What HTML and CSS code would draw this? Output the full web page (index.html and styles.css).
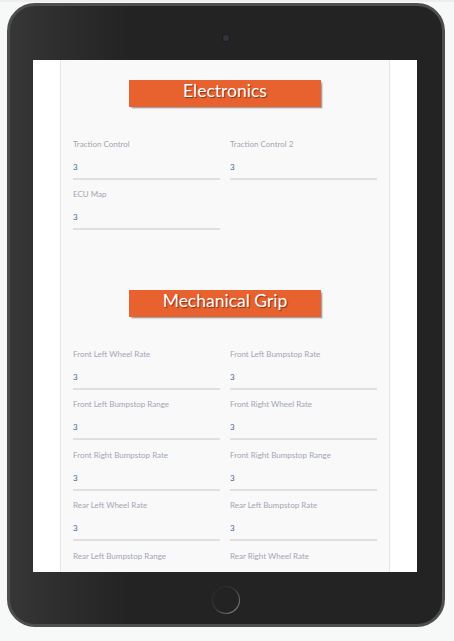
FILE: index.html
```html
<!DOCTYPE html>
<html>
<head>
<meta charset="utf-8">
<link rel="stylesheet" href="styles.css">
</head>
<body>
<div class="tablet">
  <div class="top-bar"><div class="camera"></div></div>
  <div class="screen">
    <div class="panel">
      <section class="section">
        <div class="title">Electronics</div>
        <div class="grid">
          <div class="field"><div class="label">Traction Control</div><div class="value">3</div></div>
          <div class="field"><div class="label">Traction Control 2</div><div class="value">3</div></div>
          <div class="field"><div class="label">ECU Map</div><div class="value">3</div></div>
        </div>
      </section>
      <section class="section section-gap">
        <div class="title">Mechanical Grip</div>
        <div class="grid">
          <div class="field"><div class="label">Front Left Wheel Rate</div><div class="value">3</div></div>
          <div class="field"><div class="label">Front Left Bumpstop Rate</div><div class="value">3</div></div>
          <div class="field"><div class="label">Front Left Bumpstop Range</div><div class="value">3</div></div>
          <div class="field"><div class="label">Front Right Wheel Rate</div><div class="value">3</div></div>
          <div class="field"><div class="label">Front Right Bumpstop Rate</div><div class="value">3</div></div>
          <div class="field"><div class="label">Front Right Bumpstop Range</div><div class="value">3</div></div>
          <div class="field"><div class="label">Rear Left Wheel Rate</div><div class="value">3</div></div>
          <div class="field"><div class="label">Rear Left Bumpstop Rate</div><div class="value">3</div></div>
          <div class="field"><div class="label">Rear Left Bumpstop Range</div><div class="value">3</div></div>
          <div class="field"><div class="label">Rear Right Wheel Rate</div><div class="value">3</div></div>
        </div>
      </section>
    </div>
  </div>
  <div class="bottom-bar">
    <svg class="home" width="30" height="30" viewBox="0 0 30 30">
      <defs>
        <linearGradient id="hg" x1="0" y1="0" x2="1" y2="1">
          <stop offset="0" stop-color="#232323"/>
          <stop offset="0.5" stop-color="#3c3c3c"/>
          <stop offset="1" stop-color="#8a8a8a"/>
        </linearGradient>
      </defs>
      <circle cx="15" cy="15" r="13.5" fill="none" stroke="url(#hg)" stroke-width="1.2"/>
    </svg>
  </div>
</div>
</body>
</html>
```

FILE: styles.css
```css
html, body {
  margin: 0;
  padding: 0;
}
body {
  background: #f7f8f8;
  width: 454px;
  height: 641px;
  overflow: hidden;
  border-top: 2px solid #eceeef;
  box-sizing: border-box;
}
.tablet {
  margin: 1px 0 0 7px;
  width: 438px;
  height: 624px;
  box-sizing: border-box;
  border: 3px solid #4e4e4e;
  border-radius: 28px;
  background: linear-gradient(90deg, #363636 0px, #2c2c2c 60px, #232323 120px, #232323 100%);
  display: flex;
  flex-direction: column;
}
.top-bar {
  height: 54px;
  box-sizing: border-box;
  padding-top: 29px;
  display: flex;
  justify-content: center;
}
.camera {
  width: 6px;
  height: 6px;
  border-radius: 50%;
  background: #34343c;
  box-shadow: 0 0 0 1px #1c1c20;
}
.screen {
  margin: 0 25px 0 23px;
  height: 512px;
  background: #ffffff;
  overflow: hidden;
  display: flex;
  justify-content: center;
}
.panel {
  width: 330px;
  flex: none;
  box-sizing: border-box;
  background: #f9f9f9;
  border-left: 1.5px solid #e6e6e6;
  border-right: 1.5px solid #e6e6e6;
  padding: 20px 12px 0 12px;
  font-family: "Lato", "Open Sans", sans-serif;
}
.section-gap {
  margin-top: 60px;
}
.title {
  width: 192px;
  height: 27px;
  margin: 0 auto;
  background: #e8622f;
  box-shadow: 1.5px 1.5px 1.5px rgba(0, 0, 0, 0.35);
  color: #ffffff;
  font-size: 17.5px;
  line-height: 21px;
  text-align: center;
  text-shadow: 1px 1px 1px rgba(90, 30, 10, 0.7);
}
.grid {
  margin-top: 31.5px;
  display: grid;
  grid-template-columns: 147px 147px;
  column-gap: 10px;
  row-gap: 9.5px;
}
.label {
  font-size: 8px;
  line-height: 10px;
  color: #a2a6b2;
  white-space: nowrap;
}
.value {
  padding: 12px 0 5px 0;
  font-size: 8px;
  line-height: 12px;
  color: #3e6596;
  border-bottom: 2px solid #e0e0e0;
}
.bottom-bar {
  flex: 1;
  display: flex;
  justify-content: center;
  padding-top: 13px;
  box-sizing: border-box;
}
.home {
  display: block;
}
```
